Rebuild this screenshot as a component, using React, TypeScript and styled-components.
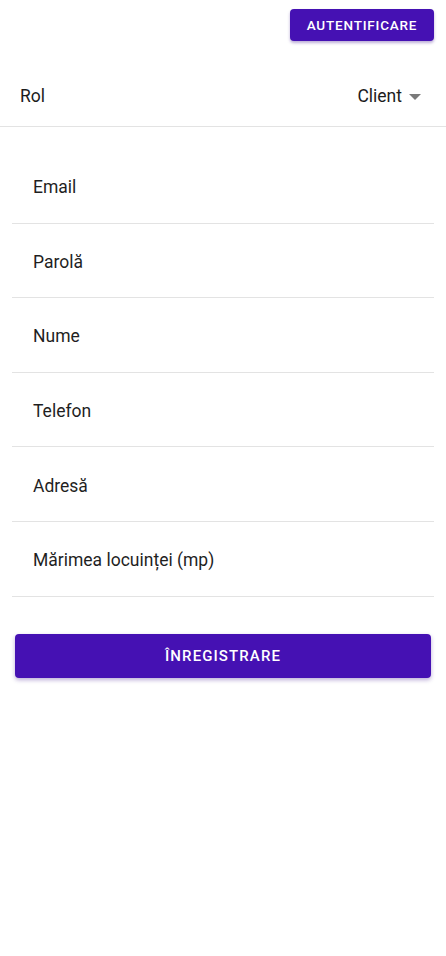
import React from "react";
import styled, { createGlobalStyle } from "styled-components";

const Global = createGlobalStyle`
  html, body { margin: 0; padding: 0; background: #fff; }
  body { font-family: Roboto, "Noto Sans", sans-serif; color: #1c1c1c; }
  * { box-sizing: border-box; }
`;

const PURPLE = "#4511b3";

const Page = styled.div`
  width: 446px;
  min-height: 956px;
  display: flex;
  flex-direction: column;
`;

const Header = styled.header`
  display: flex;
  justify-content: flex-end;
  padding: 9px 12px 0 0;
`;

const SmallButton = styled.button`
  height: 32px;
  width: 144px;
  border: none;
  border-radius: 4px;
  background: ${PURPLE};
  color: #fff;
  font-family: Roboto, sans-serif;
  font-size: 13.5px;
  font-weight: 500;
  letter-spacing: 0.8px;
  box-shadow: 0 2px 3px rgba(60, 20, 140, 0.35);
  padding: 0;
`;

const RoleRow = styled.div`
  margin-top: 25px;
  height: 61px;
  display: flex;
  align-items: center;
  justify-content: space-between;
  padding: 0 25px 0 20px;
  border-bottom: 1px solid #e3e3e3;
  font-size: 17.5px;
`;

const Select = styled.div`
  display: flex;
  align-items: center;
  gap: 7px;
`;

const Caret = styled.span`
  width: 0;
  height: 0;
  border-left: 6px solid transparent;
  border-right: 6px solid transparent;
  border-top: 6px solid #7a7a7a;
  margin-top: 1px;
`;

const Form = styled.div`
  margin: 22px 12px 0;
  display: flex;
  flex-direction: column;
`;

const Field = styled.div`
  height: 74.6px;
  display: flex;
  align-items: center;
  padding: 3px 0 0 21px;
  border-bottom: 1px solid #e3e3e3;
  font-size: 17.5px;
  color: #1f1f1f;
`;

const MainButton = styled.button`
  margin: 37px 15px 0;
  height: 44px;
  border: none;
  border-radius: 4px;
  background: ${PURPLE};
  color: #fff;
  font-family: Roboto, sans-serif;
  font-size: 15px;
  font-weight: 500;
  letter-spacing: 1.1px;
  box-shadow: 0 2px 4px rgba(60, 20, 140, 0.35);
`;

const fields = ["Email", "Parolă", "Nume", "Telefon", "Adresă", "Mărimea locuinței (mp)"];

export default function App() {
  return (
    <Page>
      <Global />
      <Header>
        <SmallButton>AUTENTIFICARE</SmallButton>
      </Header>
      <RoleRow>
        <span>Rol</span>
        <Select>
          <span>Client</span>
          <Caret />
        </Select>
      </RoleRow>
      <Form>
        {fields.map((f) => (
          <Field key={f}>{f}</Field>
        ))}
      </Form>
      <MainButton>ÎNREGISTRARE</MainButton>
    </Page>
  );
}
